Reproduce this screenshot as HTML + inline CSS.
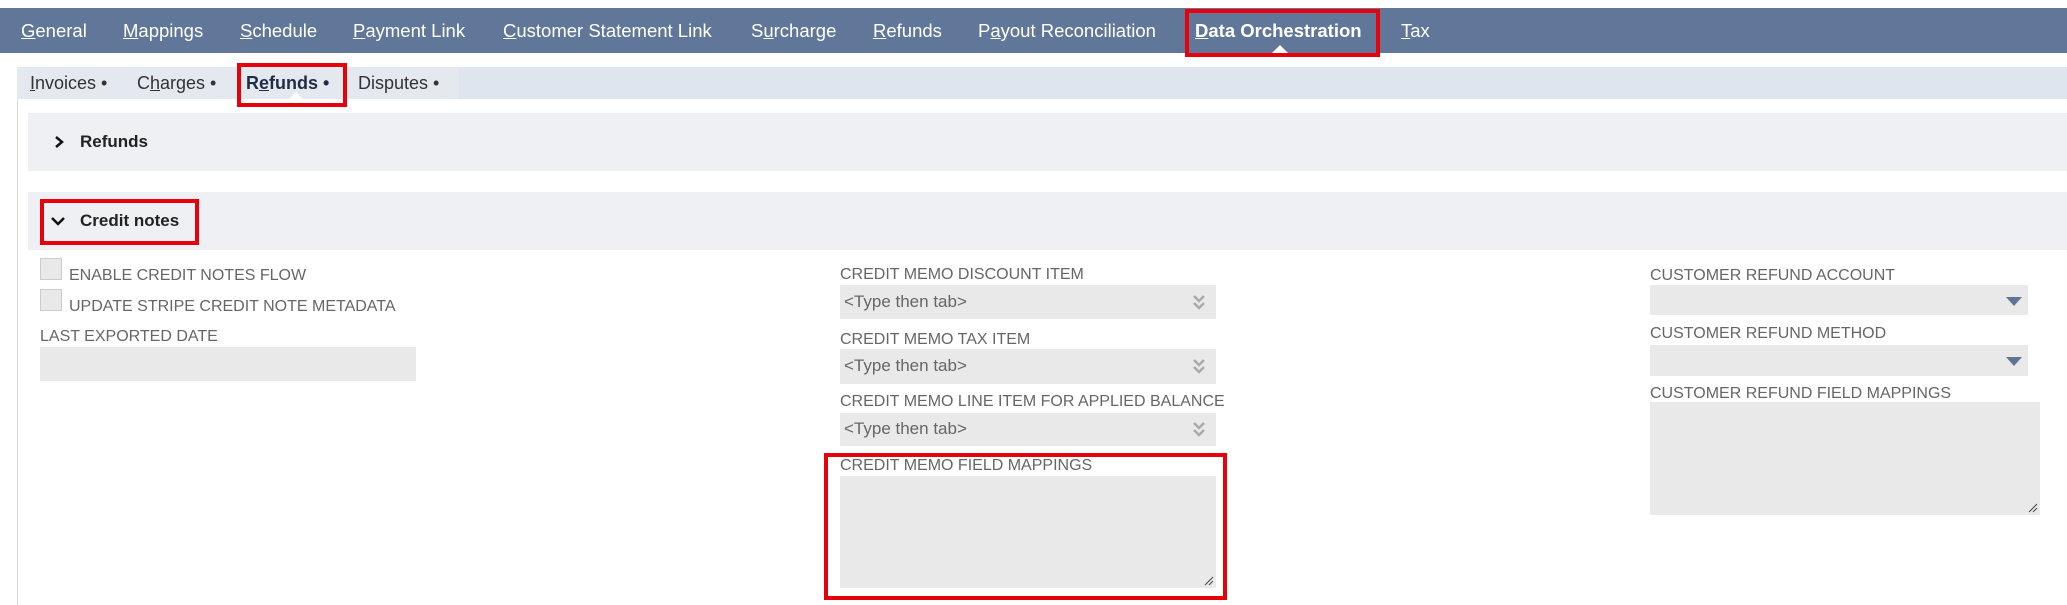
<!DOCTYPE html>
<html><head><meta charset="utf-8"><style>
*{margin:0;padding:0;box-sizing:border-box}
body{width:2067px;height:605px;background:#fff;position:relative;overflow:hidden;font-family:"Liberation Sans",Arial,sans-serif}
.a{position:absolute}
.nav{left:0;top:8px;width:2067px;height:45px;background:#607799}
.nav span{position:absolute;top:12px;color:#fff;font-size:18.5px;white-space:nowrap}
.nav u{text-decoration:underline}
.sub{left:17px;top:67px;width:2050px;height:32px;background:#dfe5ee}
.sub span{position:absolute;top:6px;color:#333;font-size:18px;white-space:nowrap}
.red{position:absolute;border:4px solid #e8000b}
.sec{left:28px;width:2039px;height:58px;background:#eff0f4}
.sec b{position:absolute;left:52px;top:19px;font-size:17px;color:#222}
.lbl{position:absolute;color:#666;font-size:16px;white-space:nowrap;line-height:18px}
.inp{position:absolute;background:#e9e9e9}
.ph{position:absolute;left:4px;top:7px;color:#666;font-size:17px}
.cb{position:absolute;width:22px;height:22px;background:#e9e9e9;border:1px solid #ccc}
</style></head><body>
<div class="a nav">
<span style="left:21px"><u>G</u>eneral</span>
<span style="left:123px"><u>M</u>appings</span>
<span style="left:240px"><u>S</u>chedule</span>
<span style="left:353px"><u>P</u>ayment Link</span>
<span style="left:503px"><u>C</u>ustomer Statement Link</span>
<span style="left:751px">S<u>u</u>rcharge</span>
<span style="left:873px"><u>R</u>efunds</span>
<span style="left:978px">P<u>a</u>yout Reconciliation</span>
<span style="left:1195px;font-weight:bold"><u>D</u>ata Orchestration</span>
<span style="left:1401px"><u>T</u>ax</span>
<div class="a" style="left:1272px;top:37px;width:0;height:0;border-left:8px solid transparent;border-right:8px solid transparent;border-bottom:8px solid #fff"></div>
</div>
<div class="red" style="left:1185px;top:9px;width:195px;height:48px"></div>
<div class="a sub">
<div class="a" style="left:0;top:0;width:442px;height:32px;background:#e4e8ef"></div>
<span style="left:13px"><u>I</u>nvoices •</span>
<span style="left:120px">C<u>h</u>arges •</span>
<span style="left:229px;font-weight:bold;color:#1f2d45">R<u>e</u>funds •</span>
<span style="left:341px">Disputes •</span>
<div class="a" style="left:272px;top:25px;width:0;height:0;border-left:7px solid transparent;border-right:7px solid transparent;border-bottom:7px solid #fff"></div>
</div>
<div class="red" style="left:237px;top:63px;width:110px;height:44px"></div>
<div class="a" style="left:17px;top:99px;width:1px;height:506px;background:#ddd"></div>
<div class="a sec" style="top:113px"><svg class="a" style="left:25px;top:22px" width="12" height="14"><path d="M3 2 L9 7 L3 12" stroke="#111" stroke-width="2.5" fill="none"/></svg><b style="left:52px">Refunds</b></div>
<div class="a sec" style="top:192px"><svg class="a" style="left:22px;top:23px" width="16" height="12"><path d="M2 3 L8 9 L14 3" stroke="#111" stroke-width="2.5" fill="none"/></svg><b style="left:52px">Credit notes</b></div>
<div class="red" style="left:40px;top:199px;width:159px;height:46px"></div>

<div class="cb" style="left:40px;top:258px"></div>
<div class="lbl" style="left:69px;top:267px">ENABLE CREDIT NOTES FLOW</div>
<div class="cb" style="left:40px;top:289px"></div>
<div class="lbl" style="left:69px;top:298px">UPDATE STRIPE CREDIT NOTE METADATA</div>
<div class="lbl" style="left:40px;top:328px">LAST EXPORTED DATE</div>
<div class="inp" style="left:40px;top:347px;width:376px;height:34px"></div>

<div class="lbl" style="left:840px;top:266px">CREDIT MEMO DISCOUNT ITEM</div>
<div class="inp" style="left:840px;top:285px;width:376px;height:34px"><span class="ph">&lt;Type then tab&gt;</span><svg class="a" style="left:352px;top:9px" width="14" height="17"><path d="M2 2 L7 7 L12 2 M2 9 L7 14 L12 9" stroke="#aaa" stroke-width="2.5" fill="none"/></svg></div>
<div class="lbl" style="left:840px;top:331px">CREDIT MEMO TAX ITEM</div>
<div class="inp" style="left:840px;top:349px;width:376px;height:35px"><span class="ph">&lt;Type then tab&gt;</span><svg class="a" style="left:352px;top:9px" width="14" height="17"><path d="M2 2 L7 7 L12 2 M2 9 L7 14 L12 9" stroke="#aaa" stroke-width="2.5" fill="none"/></svg></div>
<div class="lbl" style="left:840px;top:393px">CREDIT MEMO LINE ITEM FOR APPLIED BALANCE</div>
<div class="inp" style="left:840px;top:413px;width:376px;height:33px"><span class="ph" style="top:6px">&lt;Type then tab&gt;</span><svg class="a" style="left:352px;top:8px" width="14" height="17"><path d="M2 2 L7 7 L12 2 M2 9 L7 14 L12 9" stroke="#aaa" stroke-width="2.5" fill="none"/></svg></div>
<div class="red" style="left:824px;top:453px;width:403px;height:147px"></div>
<div class="lbl" style="left:840px;top:457px">CREDIT MEMO FIELD MAPPINGS</div>
<div class="inp" style="left:840px;top:476px;width:376px;height:112px"><svg class="a" style="left:364px;top:100px" width="10" height="10"><path d="M1 9 L9 1 M5 9 L9 5" stroke="#444" stroke-width="1"/></svg></div>

<div class="lbl" style="left:1650px;top:267px">CUSTOMER REFUND ACCOUNT</div>
<div class="inp" style="left:1650px;top:285px;width:378px;height:30px"><div class="a" style="left:356px;top:12px;border-left:8px solid transparent;border-right:8px solid transparent;border-top:9px solid #5e7596"></div></div>
<div class="lbl" style="left:1650px;top:325px">CUSTOMER REFUND METHOD</div>
<div class="inp" style="left:1650px;top:345px;width:378px;height:31px"><div class="a" style="left:356px;top:12px;border-left:8px solid transparent;border-right:8px solid transparent;border-top:9px solid #5e7596"></div></div>
<div class="lbl" style="left:1650px;top:385px">CUSTOMER REFUND FIELD MAPPINGS</div>
<div class="inp" style="left:1650px;top:402px;width:390px;height:113px"><svg class="a" style="left:378px;top:101px" width="10" height="10"><path d="M1 9 L9 1 M5 9 L9 5" stroke="#444" stroke-width="1"/></svg></div>
</body></html>
